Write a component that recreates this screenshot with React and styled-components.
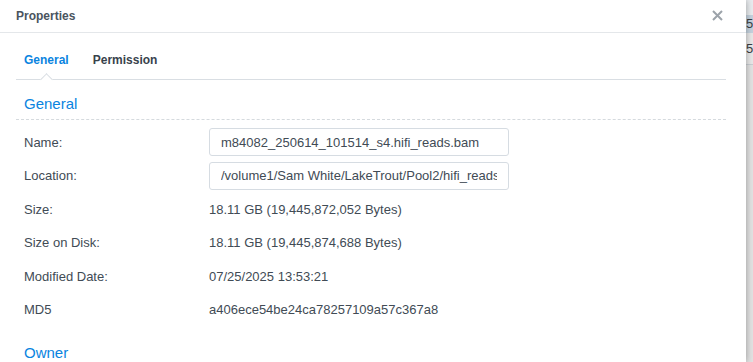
import styled, { createGlobalStyle } from 'styled-components';

const GlobalStyle = createGlobalStyle`
  html, body {
    margin: 0;
    padding: 0;
    background: #e4e4e4;
    font-family: "Liberation Sans", Arial, sans-serif;
    overflow: hidden;
  }
`;

const Page = styled.div`
  display: flex;
  width: 753px;
  height: 362px;
  overflow: hidden;
`;

const Dialog = styled.div`
  position: relative;
  z-index: 1;
  width: 746px;
  flex: none;
  height: 362px;
  background: #fff;
  box-shadow: 0 0 7px rgba(0, 0, 0, 0.35);
  color: #414b55;
`;

const Header = styled.div`
  display: flex;
  align-items: center;
  justify-content: space-between;
  height: 33px;
  padding: 0 23px 0 16px;
  border-bottom: 1px solid #e4e7ea;
  box-sizing: border-box;
`;

const Title = styled.div`
  font-size: 12px;
  font-weight: bold;
  color: #4a545e;
`;

const CloseButton = styled.button`
  display: flex;
  padding: 0;
  margin-top: -2px;
  border: none;
  background: none;
  cursor: pointer;
`;

const TabList = styled.div`
  display: flex;
  margin: 13px 20px 0 16px;
  border-bottom: 1px solid #d9dee3;
`;

const Tab = styled.div`
  position: relative;
  padding: 0 8px 5px;
  margin-right: 8px;
  line-height: 28px;
  font-size: 12px;
  font-weight: bold;
  color: ${(p) => (p.active ? '#0a84e0' : '#38424c')};

  &::after {
    content: '';
    display: ${(p) => (p.active ? 'block' : 'none')};
    position: absolute;
    left: 50%;
    bottom: -5px;
    width: 8px;
    height: 8px;
    margin-left: -4px;
    background: #fff;
    border-top: 1px solid #d9dee3;
    border-left: 1px solid #d9dee3;
    transform: rotate(45deg);
  }
`;

const Section = styled.div`
  margin: 0 20px 0 16px;
`;

const SectionTitle = styled.div`
  margin-top: 12px;
  padding: 1px 8px 4px;
  line-height: 22px;
  font-size: 15px;
  color: #0a84e0;
  border-bottom: ${(p) => (p.dashed ? '1px dashed #d5dade' : 'none')};
`;

const Rows = styled.div`
  display: grid;
  grid-template-columns: 193px 300px;
  grid-auto-rows: 28px;
  row-gap: 5.6px;
  margin-top: 8px;
  font-size: 13px;
`;

const Label = styled.div`
  display: flex;
  align-items: center;
  padding-left: 8px;
`;

const Value = styled.div`
  display: flex;
  align-items: center;
  white-space: nowrap;
`;

const Input = styled.input`
  width: 300px;
  height: 28px;
  box-sizing: border-box;
  padding: 0 11px;
  border: 1px solid #d6dce2;
  border-radius: 3px;
  font-family: inherit;
  font-size: 13px;
  color: #414b55;
  background: #fff;
  outline: none;
`;

const OwnerTitle = styled(SectionTitle)`
  margin-top: 17px;
`;

const Backdrop = styled.div`
  flex: 1;
  background: #e2e2e2;
  font-size: 13px;
  color: #3a3f44;
`;

const BackRow = styled.div`
  height: ${(p) => p.h}px;
  line-height: ${(p) => p.h}px;
  background: ${(p) => p.bg};
  border-bottom: ${(p) => (p.line ? '1px solid #c9ced3' : 'none')};
  white-space: nowrap;
  overflow: hidden;
`;

const rows = [
  { label: 'Name:', input: 'm84082_250614_101514_s4.hifi_reads.bam' },
  { label: 'Location:', input: '/volume1/Sam White/LakeTrout/Pool2/hifi_reads' },
  { label: 'Size:', value: '18.11 GB (19,445,872,052 Bytes)' },
  { label: 'Size on Disk:', value: '18.11 GB (19,445,874,688 Bytes)' },
  { label: 'Modified Date:', value: '07/25/2025 13:53:21' },
  { label: 'MD5', value: 'a406ece54be24ca78257109a57c367a8' },
];

export default function App() {
  return (
    <Page>
      <GlobalStyle />
      <Dialog>
        <Header>
          <Title>Properties</Title>
          <CloseButton aria-label="Close">
            <svg width="11" height="11" viewBox="0 0 11 11">
              <path d="M1 1L10 10M10 1L1 10" stroke="#9ca3aa" strokeWidth="2" />
            </svg>
          </CloseButton>
        </Header>
        <TabList>
          <Tab active>General</Tab>
          <Tab>Permission</Tab>
        </TabList>
        <Section>
          <SectionTitle dashed>General</SectionTitle>
          <Rows>
            {rows.map((r) => (
              <>
                <Label key={r.label}>{r.label}</Label>
                <Value key={r.label + 'v'}>
                  {r.input ? <Input readOnly value={r.input} /> : r.value}
                </Value>
              </>
            ))}
          </Rows>
          <OwnerTitle>Owner</OwnerTitle>
        </Section>
      </Dialog>
      <Backdrop>
        <BackRow h={15} bg="#e9ecef" />
        <BackRow h={18} bg="#c4d2de">5.</BackRow>
        <BackRow h={31} bg="#e8e8e8" line>5.</BackRow>
      </Backdrop>
    </Page>
  );
}
